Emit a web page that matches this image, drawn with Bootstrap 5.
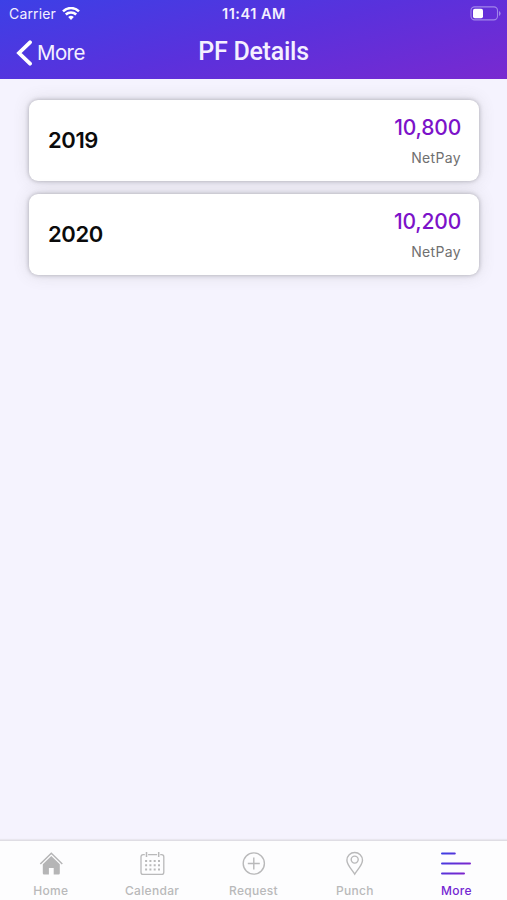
<!DOCTYPE html>
<html lang="en">
<head>
<meta charset="utf-8">
<meta name="viewport" content="width=device-width, initial-scale=1">
<title>PF Details</title>
<link href="https://cdn.jsdelivr.net/npm/bootstrap@5.3.0/dist/css/bootstrap.min.css" rel="stylesheet">
<style>
body{font-family:Inter,"Liberation Sans",sans-serif;background:#f5f3fe;color:#0b0b0b;height:900px;overflow:hidden}
svg{display:block;flex:none}
.app-head{height:79px;background:linear-gradient(166deg,#3c40e6 0%,#5a31dc 50%,#7929d0 100%);color:#f4f0ff}
.status{height:27px;font-size:14px;line-height:27px;padding:0 6px 0 9px}
.carrier{letter-spacing:.15px;margin-right:6px}
.clock{font-size:14.5px;font-weight:600;letter-spacing:.5px;margin-right:2px}
.title-row{height:52px;padding-left:16px}
.back{font-size:20.5px;font-weight:400;letter-spacing:-.6px;line-height:52px;gap:5px}
.title{font-family:Roboto,sans-serif;font-size:25px;font-weight:500;line-height:50px;letter-spacing:-.25px}
.list{padding:21px 28px 0 29px;gap:13px}
.pay{height:81px;border-radius:9px;background:#fff;padding:0 18px 0 19px;box-shadow:0 0 4px rgba(60,60,70,.36),0 0 16px rgba(100,100,90,.18)}
.year{font-size:22px;font-weight:600;letter-spacing:-.4px;line-height:81px}
.amount{font-size:21px;font-weight:500;color:#7c12c9;line-height:30px;letter-spacing:-.2px;padding-top:13px}
.caption{font-size:14px;color:#707070;line-height:20px;letter-spacing:.35px;padding-top:5px}
.tabs{height:60px;background:#fdfdfe;border-top:1px solid #dfdde4;box-shadow:0 -1px 1px #e9e7ef}
.tab{color:#b9b9ba;font-size:12px;font-weight:500;padding-top:9px;letter-spacing:.3px;line-height:16px;gap:6px}
.tab.on{color:#7426d2}
</style>
<script src="https://cdn.jsdelivr.net/npm/bootstrap@5.3.0/dist/js/bootstrap.bundle.min.js"></script>
</head>
<body class="d-flex flex-column m-0">
<header class="app-head">
  <div class="status row g-0">
    <div class="col d-flex align-items-center"><span class="carrier">Carrier</span>
      <svg width="18" height="14" viewBox="0 0 18 14" fill="none" stroke="#fff" stroke-width="2.5"><path d="M1 4.3a11.5 11.5 0 0 1 16 0M3.8 7.5a7.5 7.5 0 0 1 10.4 0"/><path d="M9 13 6.2 9.9a4.2 4.2 0 0 1 5.6 0z" fill="#fff" stroke="none"/></svg>
    </div>
    <div class="col-auto clock">11:41 AM</div>
    <div class="col d-flex align-items-center justify-content-end">
      <svg width="31" height="15" viewBox="0 0 31 15"><rect x="1" y=".9" width="26.5" height="13" rx="3.6" fill="none" stroke="#a186ea" stroke-width="1.1"/><rect x="3" y="2.8" width="10" height="9.4" rx="1.8" fill="#fff"/><path d="M29 5v5q1.6-.8 1.6-2.5T29 5z" fill="#a186ea"/></svg>
    </div>
  </div>
  <nav class="title-row row g-0">
    <a class="col back d-flex align-items-center text-reset text-decoration-none" href="#">
      <svg width="16" height="26" viewBox="0 0 16 26" fill="none" stroke="#fff" stroke-width="3.8" stroke-linecap="round"><path d="M14 2.3 3 13l11 10.7"/></svg><span>More</span></a>
    <h1 class="col-auto title m-0">PF Details</h1>
    <div class="col pe-3"></div>
  </nav>
</header>
<main class="list d-flex flex-column flex-grow-1">
  <article class="pay d-flex justify-content-between"><div class="year">2019</div><div class="text-end"><div class="amount">10,800</div><div class="caption">NetPay</div></div></article>
  <article class="pay d-flex justify-content-between"><div class="year">2020</div><div class="text-end"><div class="amount">10,200</div><div class="caption">NetPay</div></div></article>
</main>
<footer class="tabs row g-0">
  <div class="tab col d-flex flex-column align-items-center">
    <svg width="26" height="27" viewBox="0 0 26 27"><path d="M2.3 14 13.3 3.3 24.3 14" fill="none" stroke="#b5b5b6" stroke-width="1.5"/><path d="M13.3 6 21.8 14.3v9q0 1.2-1.2 1.2h-4.9v-6.6h-4.8v6.6H6q-1.2 0-1.2-1.2v-9z" fill="#b5b5b6"/></svg><span>Home</span></div>
  <div class="tab col d-flex flex-column align-items-center">
    <svg width="26" height="27" viewBox="-.6 0 26 27" fill="none" stroke="#b9b9ba" stroke-width="1.3"><path d="M5.2 4.6H3.6Q1.4 4.6 1.4 6.8v15.4q0 2.2 2.2 2.2h18.4q2.2 0 2.2-2.2V6.8q0-2.2-2.2-2.2h-1.4M8.5 4.6h9"/><path d="M6.9 2v5M19.1 2v5" stroke-width="1.5"/><path d="M5.5 11h15M5.5 15.3h15M5.5 19.6h15" stroke-width="2" stroke-dasharray="2 2.3"/></svg><span>Calendar</span></div>
  <div class="tab col d-flex flex-column align-items-center">
    <svg width="26" height="27" viewBox="0 0 26 27" fill="none" stroke="#b9b9ba" stroke-width="1.4"><circle cx="12.8" cy="13.5" r="10.6"/><path d="M6.8 13.5h12M12.8 7.5v12"/></svg><span>Request</span></div>
  <div class="tab col d-flex flex-column align-items-center">
    <svg width="26" height="27" viewBox="0 0 26 27" fill="none" stroke="#b9b9ba" stroke-width="1.4"><path d="M12.7 24.2C10.2 20 4.9 15 4.9 10.3a7.8 7.8 0 0 1 15.6 0C20.5 15 15.2 20 12.7 24.2z"/><circle cx="12.7" cy="9.6" r="3.5"/></svg><span>Punch</span></div>
  <div class="tab on col d-flex flex-column align-items-center">
    <svg width="30" height="27" viewBox="0 0 30 27" fill="none" stroke="url(#bars)" stroke-width="2" stroke-linecap="round"><defs><linearGradient id="bars" gradientUnits="userSpaceOnUse" x1="0" y1="3" x2="30" y2="24"><stop stop-color="#3b3fe4"/><stop offset="1" stop-color="#8b20c8"/></linearGradient></defs><path d="M1 3.5h12.8M1 13.5h28M1 23.5h22"/></svg><span>More</span></div>
</footer>
</body>
</html>
